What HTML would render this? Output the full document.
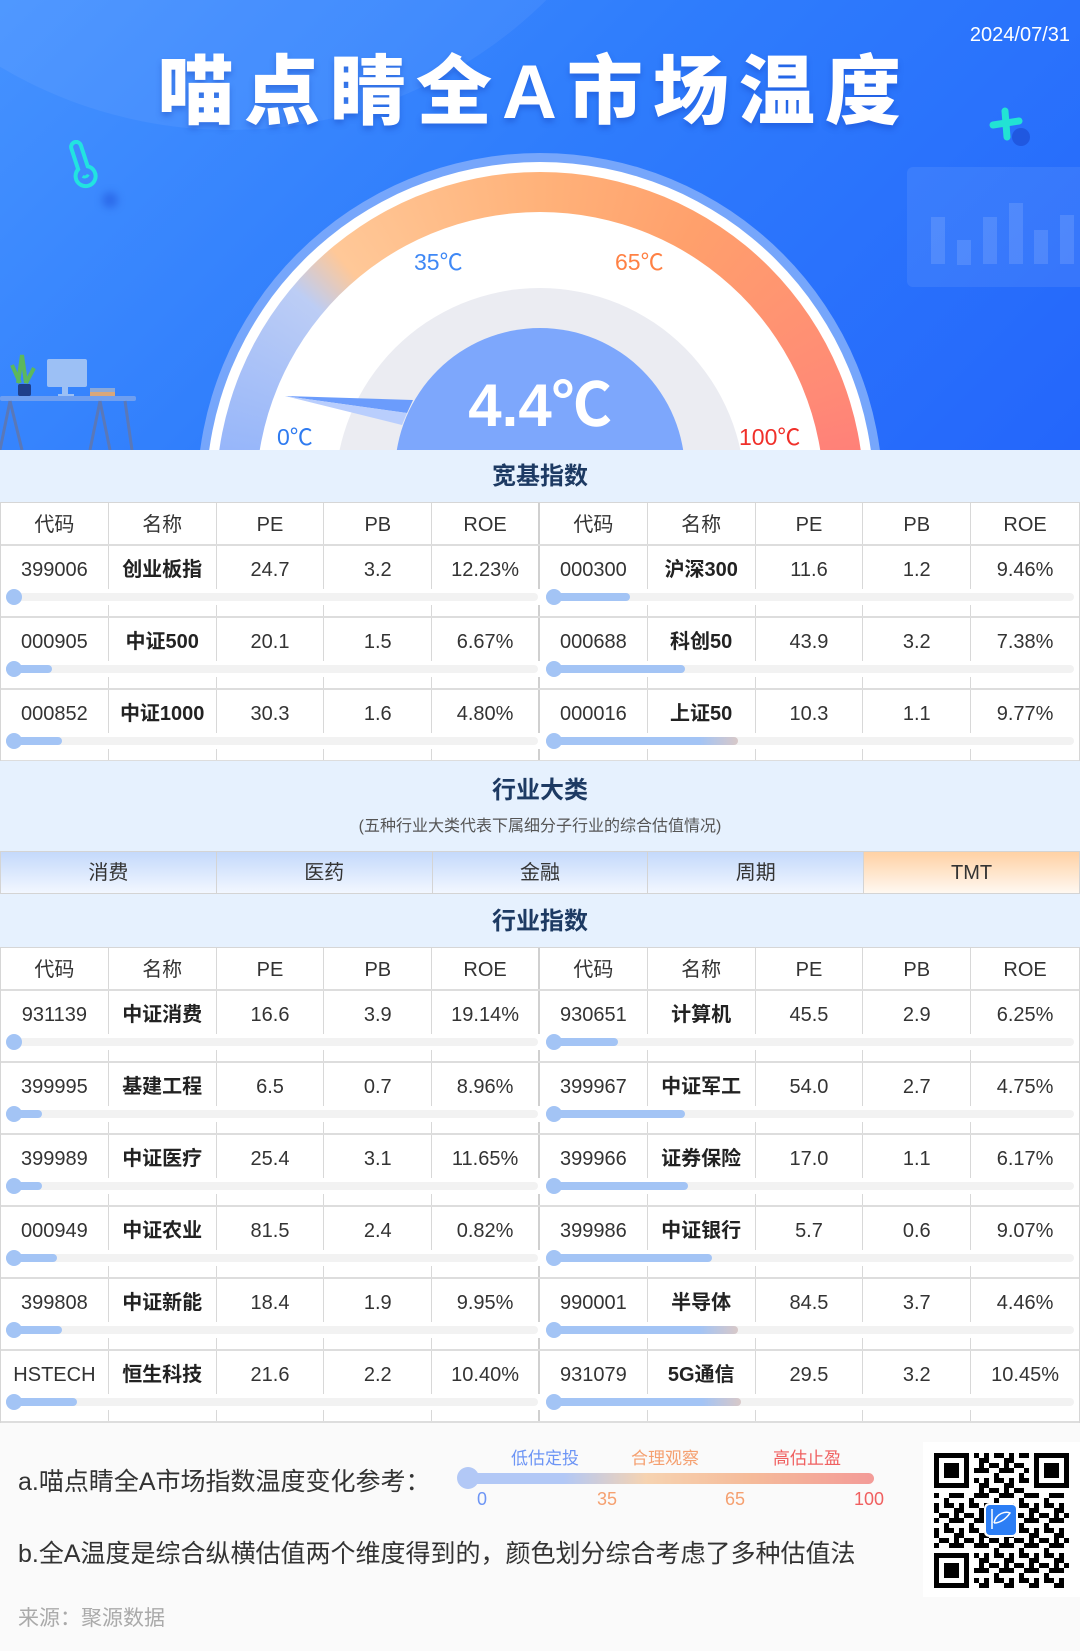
<!DOCTYPE html>
<html><head><meta charset="utf-8">
<style>
*{margin:0;padding:0;box-sizing:border-box}
body{width:1080px;height:1651px;overflow:hidden;background:#fafafa;font-family:"Liberation Sans","Noto Sans CJK SC",sans-serif;color:#333}
.hdr{position:absolute;left:0;top:0;width:1080px;height:450px;overflow:hidden;background:linear-gradient(135deg,#4592ff 0%,#2f7dfc 45%,#2466fb 100%)}
.abs{position:absolute}
.band{position:absolute;left:0;width:1080px;background:#e6f1fe;text-align:center;color:#1d3a63;font-weight:bold;font-size:24px}
.tbl{position:absolute;left:0;width:1080px;background:#fff;border-left:1px solid #d6d6d6;border-right:1px solid #d6d6d6}
.row{position:relative;height:72px;border-bottom:2px solid #ddd;display:flex}
.row.h{height:43px}
.c{width:108px;height:100%;border-right:1px solid #d8d8d8;text-align:center;font-size:20px;line-height:48px;color:#333}
.row.h .c{line-height:45px}
.c:nth-child(5){border-right:2px solid #d0d0d0}
.c:nth-child(10){border-right:none}
.c b{font-weight:bold;color:#222}
.bb{position:absolute;left:0;top:43px;width:1078px;height:16px;background:#fff}
.tr{position:absolute;top:4px;height:8px;border-radius:4px;background:#f2f2f2}
.fl{position:absolute;top:4px;height:8px;border-radius:4px;background:#a3c4f5}
.kn{position:absolute;top:0;width:16px;height:16px;border-radius:50%;background:#a3c4f5}
.tabs{position:absolute;left:0;top:851px;width:1080px;height:43px;display:flex;border:1px solid #d4d4d4}
.tab{flex:1;text-align:center;line-height:43px;font-size:20px;color:#333;background:linear-gradient(#c4d9fb,#f2f7ff);border-right:1px solid #d4d4d4}
.tab:last-child{background:linear-gradient(#ffd1a4,#fff8f1);border-right:none}
</style></head><body>
<div class="hdr">
  <div class="abs" style="left:-220px;top:-770px;width:900px;height:900px;border-radius:50%;background:rgba(255,255,255,0.06)"></div>
  <div class="abs" style="left:960px;top:24px;width:110px;text-align:right;color:#fff;font-size:20px">2024/07/31</div>
  <div class="abs" style="left:158px;top:43px;width:800px;color:#fff;font-weight:900;font-size:76px;letter-spacing:10px;line-height:100px;text-shadow:0 4px 6px rgba(20,60,180,0.35)">喵点睛全A市场温度</div>
  <svg class="abs" style="left:60px;top:140px" width="80" height="80" viewBox="0 0 80 80">
    <circle cx="50" cy="60" r="8" fill="#1f4fd8" opacity="0.5" filter="blur(4px)"/>
    <g transform="rotate(-18 22 25)" fill="none" stroke="#22e3e0" stroke-width="4">
      <path d="M17 6 a5 5 0 0 1 10 0 v22 a10 10 0 1 1 -10 0 z"/>
      <path d="M19 36 a4 4 0 0 0 6 0" stroke-width="3"/>
    </g>
  </svg>
  <svg class="abs" style="left:985px;top:105px" width="60" height="60" viewBox="0 0 60 60">
    <circle cx="36" cy="32" r="9" fill="#1a47cf" opacity="0.6"/>
    <path d="M20 6 L22 32 M8 20 L34 16" stroke="#22e3d4" stroke-width="7" stroke-linecap="round"/>
  </svg>
  <div class="abs" style="left:907px;top:167px;width:190px;height:120px;border-radius:6px;background:rgba(255,255,255,0.08)"></div>
  <div class="abs" style="left:931px;top:217px;width:14px;height:47px;background:rgba(255,255,255,0.12)"></div>
  <div class="abs" style="left:957px;top:240px;width:14px;height:25px;background:rgba(255,255,255,0.12)"></div>
  <div class="abs" style="left:983px;top:217px;width:14px;height:47px;background:rgba(255,255,255,0.12)"></div>
  <div class="abs" style="left:1009px;top:203px;width:14px;height:61px;background:rgba(255,255,255,0.12)"></div>
  <div class="abs" style="left:1034px;top:230px;width:14px;height:34px;background:rgba(255,255,255,0.12)"></div>
  <div class="abs" style="left:1060px;top:215px;width:14px;height:49px;background:rgba(255,255,255,0.12)"></div>
  <svg class="abs" style="left:0;top:350px" width="140" height="100" viewBox="0 0 140 100">
    <path d="M18 33 L22 5 L26 33 M20 33 L12 15 M26 33 L34 18" stroke="#5cb85c" stroke-width="4" fill="none"/>
    <rect x="18" y="34" width="13" height="12" rx="2" fill="#1f3f8a"/>
    <rect x="47" y="9" width="40" height="28" rx="2" fill="#9cc0f5"/>
    <rect x="62" y="37" width="6" height="8" fill="#9cc0f5"/>
    <rect x="58" y="44" width="16" height="3" fill="#9cc0f5"/>
    <rect x="90" y="38" width="25" height="4" fill="#8aa9d9"/>
    <rect x="90" y="42" width="25" height="4" fill="#d9a77a"/>
    <rect x="0" y="46" width="136" height="5" rx="2" fill="#6f9ff0"/>
    <path d="M10 51 L0 100 M10 51 L22 100 M100 51 L90 100 M100 51 L110 100 M125 51 L132 100" stroke="#5a78b8" stroke-width="3"/>
  </svg>
  <div class="abs" style="left:197px;top:153px;width:686px;height:686px;border-radius:50%;background:#76a6fb"></div>
  <div class="abs" style="left:206px;top:162px;width:668px;height:668px;border-radius:50%;background:#fff"></div>
  <div class="abs" style="left:216px;top:172px;width:648px;height:648px;border-radius:50%;background:conic-gradient(from 270deg,#8db0fb 0deg,#bccdf5 40deg,#ffc898 50deg,#ffb27a 90deg,#ffa06c 120deg,#ff8a76 160deg,#ff7a7a 180deg,#ff7a7a 360deg)"></div>
  <div class="abs" style="left:256px;top:212px;width:568px;height:568px;border-radius:50%;background:#fff"></div>
  <div class="abs" style="left:335px;top:288px;width:410px;height:410px;border-radius:50%;background:#ebecf2"></div>
  <div class="abs" style="left:395px;top:328px;width:290px;height:290px;border-radius:50%;background:#7da7fc"></div>
  <svg class="abs" style="left:0;top:0" width="1080" height="450">
    <polygon points="285,396 413,400 407,413" fill="#6b9cfc"/>
    <polygon points="285,396 407,413 402,425" fill="#b9cefd"/>
  </svg>
  <div class="abs" style="left:414px;top:243px;font-size:23px;color:#3f88f5">35℃</div>
  <div class="abs" style="left:615px;top:243px;font-size:23px;color:#ff8144">65℃</div>
  <div class="abs" style="left:277px;top:418px;font-size:23px;color:#2f7bf0">0℃</div>
  <div class="abs" style="left:739px;top:418px;font-size:23px;color:#f0302a">100℃</div>
  <div class="abs" style="left:440px;top:368px;width:200px;text-align:center;color:#fff;font-weight:bold;font-size:60px;line-height:76px">4.4℃</div>
</div>

<div class="band" style="top:450px;height:53px;line-height:53px;border-bottom:1px solid #d6d6d6">宽基指数</div>
<div class="tbl" style="top:503px">
  <div class="row h"><div class="c">代码</div><div class="c">名称</div><div class="c">PE</div><div class="c">PB</div><div class="c">ROE</div><div class="c">代码</div><div class="c">名称</div><div class="c">PE</div><div class="c">PB</div><div class="c">ROE</div></div>
  <div class="row"><div class="c">399006</div><div class="c"><b>创业板指</b></div><div class="c">24.7</div><div class="c">3.2</div><div class="c">12.23%</div><div class="c">000300</div><div class="c"><b>沪深300</b></div><div class="c">11.6</div><div class="c">1.2</div><div class="c">9.46%</div>
    <div class="bb"><div class="tr" style="left:5px;width:532px"></div><div class="kn" style="left:5px"></div><div class="tr" style="left:545px;width:528px"></div><div class="fl" style="left:545px;width:84px"></div><div class="kn" style="left:545px"></div></div></div>
  <div class="row"><div class="c">000905</div><div class="c"><b>中证500</b></div><div class="c">20.1</div><div class="c">1.5</div><div class="c">6.67%</div><div class="c">000688</div><div class="c"><b>科创50</b></div><div class="c">43.9</div><div class="c">3.2</div><div class="c">7.38%</div>
    <div class="bb"><div class="tr" style="left:5px;width:532px"></div><div class="fl" style="left:5px;width:46px"></div><div class="kn" style="left:5px"></div><div class="tr" style="left:545px;width:528px"></div><div class="fl" style="left:545px;width:139px"></div><div class="kn" style="left:545px"></div></div></div>
  <div class="row"><div class="c">000852</div><div class="c"><b>中证1000</b></div><div class="c">30.3</div><div class="c">1.6</div><div class="c">4.80%</div><div class="c">000016</div><div class="c"><b>上证50</b></div><div class="c">10.3</div><div class="c">1.1</div><div class="c">9.77%</div>
    <div class="bb"><div class="tr" style="left:5px;width:532px"></div><div class="fl" style="left:5px;width:56px"></div><div class="kn" style="left:5px"></div><div class="tr" style="left:545px;width:528px"></div><div class="fl" style="left:545px;width:192px;background:linear-gradient(90deg,#a3c4f5 80%,#d8c8c8)"></div><div class="kn" style="left:545px"></div></div></div>
</div>

<div class="band" style="top:761px;height:90px;">
  <div style="line-height:24px;padding-top:18px">行业大类</div>
  <div style="font-weight:normal;font-size:16px;color:#555;line-height:20px;margin-top:14px">(五种行业大类代表下属细分子行业的综合估值情况)</div>
</div>
<div class="tabs"><div class="tab">消费</div><div class="tab">医药</div><div class="tab">金融</div><div class="tab">周期</div><div class="tab">TMT</div></div>
<div class="band" style="top:894px;height:54px;line-height:56px;border-bottom:1px solid #d6d6d6">行业指数</div>
<div class="tbl" style="top:948px">
  <div class="row h"><div class="c">代码</div><div class="c">名称</div><div class="c">PE</div><div class="c">PB</div><div class="c">ROE</div><div class="c">代码</div><div class="c">名称</div><div class="c">PE</div><div class="c">PB</div><div class="c">ROE</div></div>
  <div class="row"><div class="c">931139</div><div class="c"><b>中证消费</b></div><div class="c">16.6</div><div class="c">3.9</div><div class="c">19.14%</div><div class="c">930651</div><div class="c"><b>计算机</b></div><div class="c">45.5</div><div class="c">2.9</div><div class="c">6.25%</div>
    <div class="bb"><div class="tr" style="left:5px;width:532px"></div><div class="kn" style="left:5px"></div><div class="tr" style="left:545px;width:528px"></div><div class="fl" style="left:545px;width:72px"></div><div class="kn" style="left:545px"></div></div></div>
  <div class="row"><div class="c">399995</div><div class="c"><b>基建工程</b></div><div class="c">6.5</div><div class="c">0.7</div><div class="c">8.96%</div><div class="c">399967</div><div class="c"><b>中证军工</b></div><div class="c">54.0</div><div class="c">2.7</div><div class="c">4.75%</div>
    <div class="bb"><div class="tr" style="left:5px;width:532px"></div><div class="fl" style="left:5px;width:36px"></div><div class="kn" style="left:5px"></div><div class="tr" style="left:545px;width:528px"></div><div class="fl" style="left:545px;width:139px"></div><div class="kn" style="left:545px"></div></div></div>
  <div class="row"><div class="c">399989</div><div class="c"><b>中证医疗</b></div><div class="c">25.4</div><div class="c">3.1</div><div class="c">11.65%</div><div class="c">399966</div><div class="c"><b>证券保险</b></div><div class="c">17.0</div><div class="c">1.1</div><div class="c">6.17%</div>
    <div class="bb"><div class="tr" style="left:5px;width:532px"></div><div class="fl" style="left:5px;width:36px"></div><div class="kn" style="left:5px"></div><div class="tr" style="left:545px;width:528px"></div><div class="fl" style="left:545px;width:142px"></div><div class="kn" style="left:545px"></div></div></div>
  <div class="row"><div class="c">000949</div><div class="c"><b>中证农业</b></div><div class="c">81.5</div><div class="c">2.4</div><div class="c">0.82%</div><div class="c">399986</div><div class="c"><b>中证银行</b></div><div class="c">5.7</div><div class="c">0.6</div><div class="c">9.07%</div>
    <div class="bb"><div class="tr" style="left:5px;width:532px"></div><div class="fl" style="left:5px;width:51px"></div><div class="kn" style="left:5px"></div><div class="tr" style="left:545px;width:528px"></div><div class="fl" style="left:545px;width:166px"></div><div class="kn" style="left:545px"></div></div></div>
  <div class="row"><div class="c">399808</div><div class="c"><b>中证新能</b></div><div class="c">18.4</div><div class="c">1.9</div><div class="c">9.95%</div><div class="c">990001</div><div class="c"><b>半导体</b></div><div class="c">84.5</div><div class="c">3.7</div><div class="c">4.46%</div>
    <div class="bb"><div class="tr" style="left:5px;width:532px"></div><div class="fl" style="left:5px;width:56px"></div><div class="kn" style="left:5px"></div><div class="tr" style="left:545px;width:528px"></div><div class="fl" style="left:545px;width:192px;background:linear-gradient(90deg,#a3c4f5 80%,#d8c8c8)"></div><div class="kn" style="left:545px"></div></div></div>
  <div class="row"><div class="c">HSTECH</div><div class="c"><b>恒生科技</b></div><div class="c">21.6</div><div class="c">2.2</div><div class="c">10.40%</div><div class="c">931079</div><div class="c"><b>5G通信</b></div><div class="c">29.5</div><div class="c">3.2</div><div class="c">10.45%</div>
    <div class="bb"><div class="tr" style="left:5px;width:532px"></div><div class="fl" style="left:5px;width:71px"></div><div class="kn" style="left:5px"></div><div class="tr" style="left:545px;width:528px"></div><div class="fl" style="left:545px;width:195px;background:linear-gradient(90deg,#a3c4f5 80%,#d8c8c8)"></div><div class="kn" style="left:545px"></div></div></div>
</div>

<div class="abs" style="left:18px;top:1462px;font-size:25px;color:#333">a.喵点睛全A市场指数温度变化参考：</div>
<div class="abs" style="left:511px;top:1444px;font-size:17px;color:#6d95f5">低估定投</div>
<div class="abs" style="left:631px;top:1444px;font-size:17px;color:#f5a070">合理观察</div>
<div class="abs" style="left:773px;top:1444px;font-size:17px;color:#f06060">高估止盈</div>
<div class="abs" style="left:460px;top:1473px;width:414px;height:11px;border-radius:6px;background:linear-gradient(90deg,#b2c8f6 0%,#b2c8f6 25%,#f6d3b1 45%,#f5bb9a 70%,#f39b98 100%)"></div>
<div class="abs" style="left:457px;top:1467px;width:22px;height:22px;border-radius:50%;background:#b2c8f6"></div>
<div class="abs" style="left:477px;top:1489px;font-size:18px;color:#6d95f5">0</div>
<div class="abs" style="left:597px;top:1489px;font-size:18px;color:#f5a070">35</div>
<div class="abs" style="left:725px;top:1489px;font-size:18px;color:#f5a070">65</div>
<div class="abs" style="left:854px;top:1489px;font-size:18px;color:#f06060">100</div>
<div class="abs" style="left:18px;top:1534px;font-size:25px;color:#333">b.全A温度是综合纵横估值两个维度得到的，颜色划分综合考虑了多种估值法</div>
<div class="abs" style="left:18px;top:1602px;font-size:21px;color:#aaa">来源：聚源数据</div>
<div class="abs" style="left:923px;top:1442px;width:157px;height:155px;background:#fff"></div>
<svg class="abs" style="left:934px;top:1453px" width="135" height="135" viewBox="0 0 135 135">
  <defs><pattern id="q" width="25" height="25" patternUnits="userSpaceOnUse">
    <rect x="0" y="0" width="5" height="10" fill="#000"/><rect x="10" y="0" width="10" height="5" fill="#000"/><rect x="5" y="10" width="10" height="5" fill="#000"/><rect x="20" y="5" width="5" height="15" fill="#000"/><rect x="0" y="15" width="5" height="5" fill="#000"/><rect x="10" y="20" width="5" height="5" fill="#000"/><rect x="15" y="15" width="5" height="5" fill="#000"/>
  </pattern></defs>
  <rect width="135" height="135" fill="url(#q)"/>
  <g><rect x="0" y="0" width="40" height="40" fill="#fff"/><rect x="0" y="0" width="35" height="35" fill="#000"/><rect x="5" y="5" width="25" height="25" fill="#fff"/><rect x="10" y="10" width="15" height="15" fill="#000"/></g>
  <g><rect x="95" y="0" width="40" height="40" fill="#fff"/><rect x="100" y="0" width="35" height="35" fill="#000"/><rect x="105" y="5" width="25" height="25" fill="#fff"/><rect x="110" y="10" width="15" height="15" fill="#000"/></g>
  <g><rect x="0" y="95" width="40" height="40" fill="#fff"/><rect x="0" y="100" width="35" height="35" fill="#000"/><rect x="105" y="5" width="0" height="0" fill="#fff"/><rect x="5" y="105" width="25" height="25" fill="#fff"/><rect x="10" y="110" width="15" height="15" fill="#000"/></g>
  <rect x="50" y="50" width="34" height="34" rx="5" fill="#fff"/>
  <rect x="52" y="52" width="30" height="30" rx="4" fill="#2c7ef5"/>
  <path d="M58 56 V76 M60 70 C62 60 72 58 76 60 C72 66 66 70 60 70" stroke="#fff" stroke-width="1.5" fill="none"/>
</svg>
</body></html>
